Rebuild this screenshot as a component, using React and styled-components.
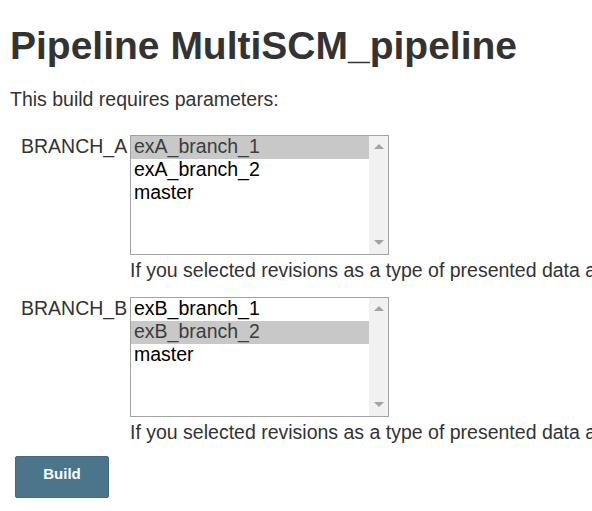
import React from "react";
import styled, { createGlobalStyle } from "styled-components";

const Global = createGlobalStyle`
  html, body {
    margin: 0;
    padding: 0;
    background: #fff;
    overflow: hidden;
  }
  body {
    font-family: "Liberation Sans", Arial, sans-serif;
    color: #333;
  }
`;

const Page = styled.div`
  padding: 23px 0 0 10px;
  width: 582px;
  overflow: hidden;
`;

const Title = styled.h1`
  margin: 0;
  font-size: 39px;
  font-weight: bold;
  line-height: 45px;
  color: #333;
`;

const Intro = styled.p`
  margin: 20px 0 0;
  font-size: 19.5px;
  line-height: 22.4px;
`;

const Params = styled.div`
  margin-top: 25px;
  display: flex;
  flex-direction: column;
  gap: 15px;
`;

const Param = styled.div`
  display: flex;
  flex-direction: column;
`;

const ParamRow = styled.div`
  display: flex;
  align-items: flex-start;
`;

const Label = styled.div`
  width: 120px;
  box-sizing: border-box;
  padding: 0 0 0 11px;
  font-size: 19.5px;
  line-height: 22.4px;
  color: #333;
  white-space: nowrap;
`;

const ListBox = styled.div`
  width: 259px;
  height: 120px;
  box-sizing: border-box;
  border: 1px solid #a3a3a3;
  display: flex;
  background: #fff;
`;

const Options = styled.div`
  flex: 1;
  display: flex;
  flex-direction: column;
`;

const Option = styled.div`
  font-size: 19.5px;
  line-height: 21.5px;
  padding: 0 3px 1.5px;
  color: ${(p) => (p.$selected ? "#3c3c3c" : "#000")};
  background: ${(p) => (p.$selected ? "#c8c8c8" : "transparent")};
  white-space: nowrap;
`;

const Scrollbar = styled.div`
  width: 19px;
  background: #f1f1f1;
  display: flex;
  flex-direction: column;
  justify-content: space-between;
  align-items: center;
  padding: 8px 0 9px;
  box-sizing: border-box;
`;

const Arrow = styled.div`
  width: 0;
  height: 0;
  border-left: 5px solid transparent;
  border-right: 5px solid transparent;
  ${(p) =>
    p.$down
      ? "border-top: 5px solid #a3a3a3;"
      : "border-bottom: 5px solid #a3a3a3;"}
`;

const Help = styled.div`
  margin: 4px 0 0 120px;
  font-size: 19.5px;
  line-height: 22.4px;
  color: #333;
  white-space: nowrap;
`;

const BuildButton = styled.button`
  margin: 13px 0 0 5px;
  width: 94px;
  height: 42px;
  background: #4b758b;
  border: 1px solid #456a7e;
  border-radius: 2px;
  color: #fff;
  font-family: "Liberation Sans", Arial, sans-serif;
  font-weight: bold;
  font-size: 15px;
  padding: 0 0 7px;
  cursor: pointer;
`;

const helpText =
  "If you selected revisions as a type of presented data as a parameter, the list shows them";

const params = [
  {
    name: "BRANCH_A",
    options: ["exA_branch_1", "exA_branch_2", "master"],
    selected: 0,
  },
  {
    name: "BRANCH_B",
    options: ["exB_branch_1", "exB_branch_2", "master"],
    selected: 1,
  },
];

export default function App() {
  return (
    <>
      <Global />
      <Page>
        <Title>Pipeline MultiSCM_pipeline</Title>
        <Intro>This build requires parameters:</Intro>
        <Params>
          {params.map((p) => (
            <Param key={p.name}>
              <ParamRow>
                <Label>{p.name}</Label>
                <ListBox>
                  <Options>
                    {p.options.map((o, i) => (
                      <Option key={o} $selected={i === p.selected}>
                        {o}
                      </Option>
                    ))}
                  </Options>
                  <Scrollbar>
                    <Arrow />
                    <Arrow $down />
                  </Scrollbar>
                </ListBox>
              </ParamRow>
              <Help>{helpText}</Help>
            </Param>
          ))}
        </Params>
        <BuildButton>Build</BuildButton>
      </Page>
    </>
  );
}
